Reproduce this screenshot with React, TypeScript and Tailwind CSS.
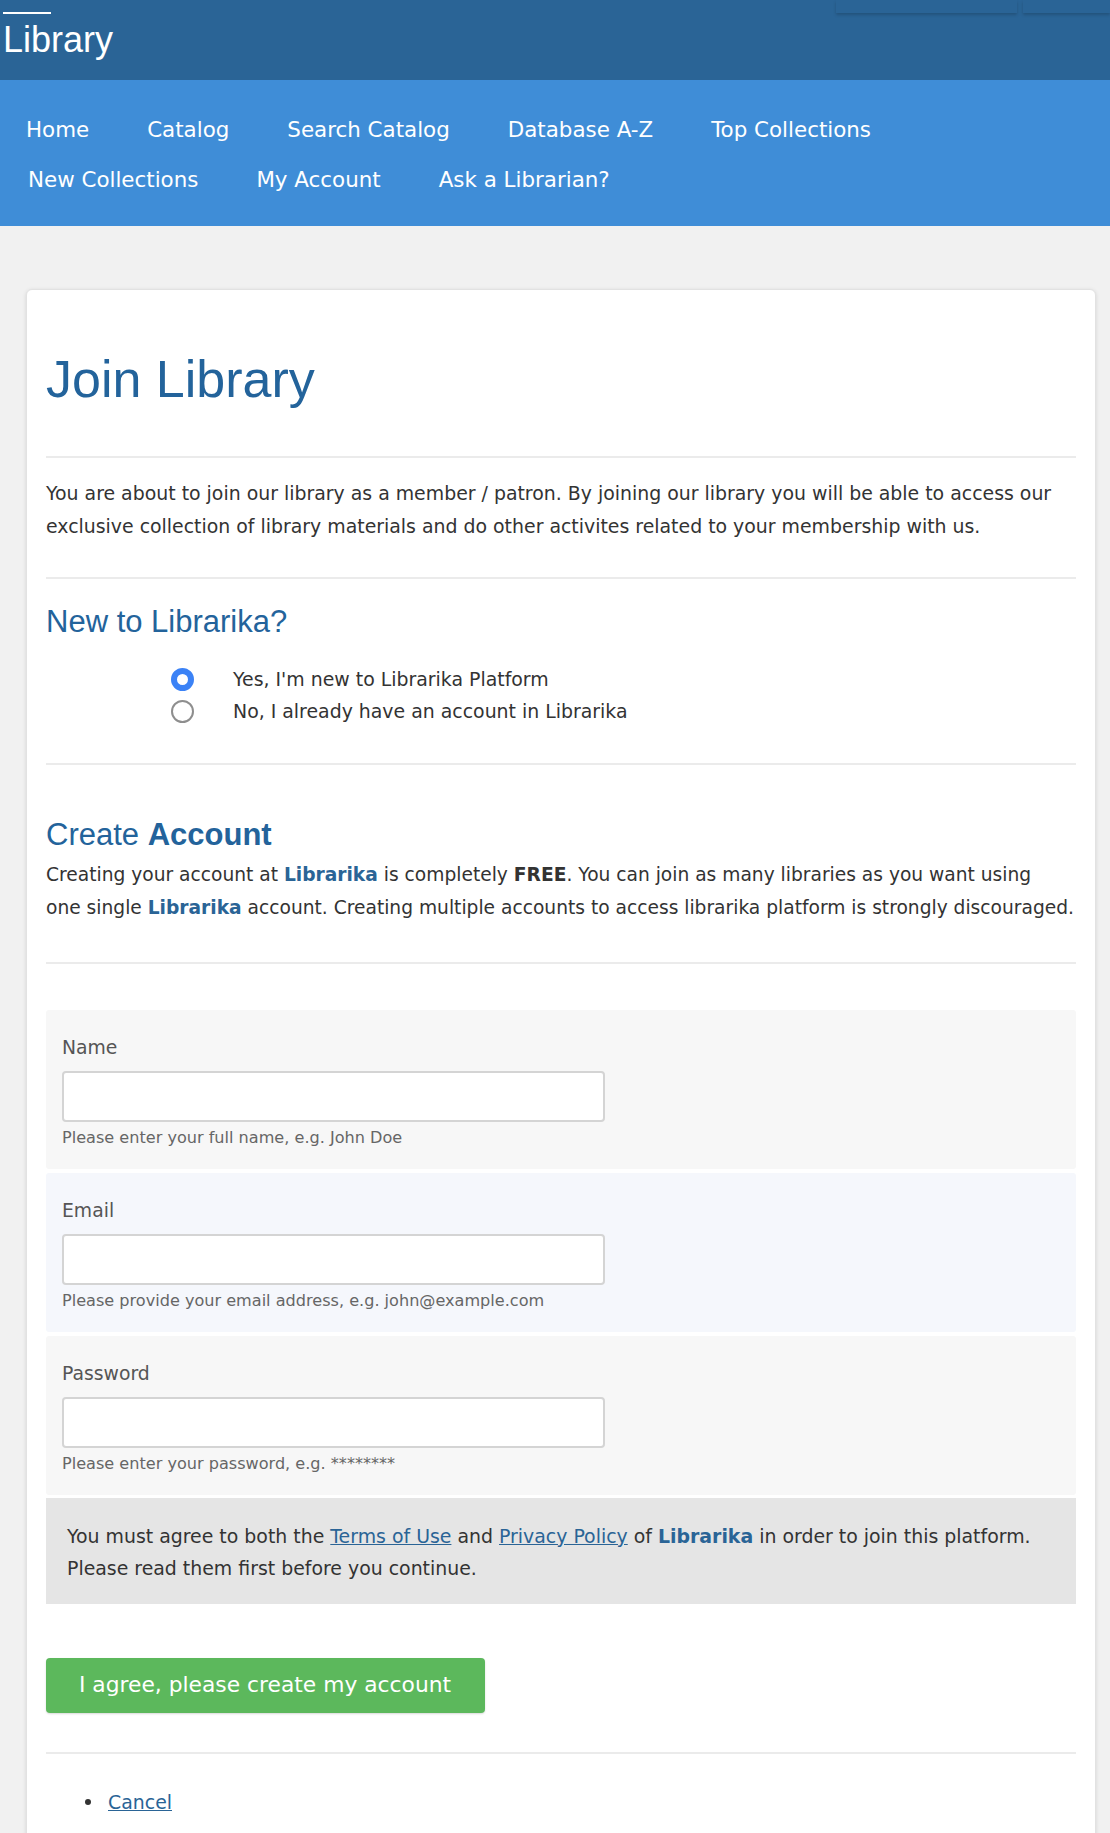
import React from "react";

const body = "font-['DejaVu_Sans',Verdana,sans-serif]";
const head = "font-['Liberation_Sans',Arial,sans-serif]";

function Hr() {
  return <div className="h-[2px] bg-[#ebebeb]" />;
}

function Field({ label, help, bg, type = "text" }: { label: string; help: string; bg: string; type?: string }) {
  return (
    <div className={`${bg} h-[159px] rounded-[3px] px-[16px] pt-[27px]`}>
      <div className="text-[18.8px] leading-[22px] text-[#555]">{label}</div>
      <input
        type={type}
        className="mt-[12px] block h-[51px] w-[543px] rounded-[4px] border-2 border-[#d4d4d4] bg-white"
      />
      <div className="mt-[6px] text-[16.1px] leading-[20px] text-[#666]">{help}</div>
    </div>
  );
}

function Radio({ checked, label }: { checked: boolean; label: string }) {
  return (
    <div className="flex h-[32px] items-center">
      <div className="flex w-[187px] justify-end pr-[39px]">
        {checked ? (
          <span className="block h-[23px] w-[23px] rounded-full border-[6px] border-[#3b82f6] bg-white" />
        ) : (
          <span className="block h-[23px] w-[23px] rounded-full border-2 border-[#8e8e8e] bg-white" />
        )}
      </div>
      <span className="text-[18.9px] text-[#333]">{label}</span>
    </div>
  );
}

export default function App() {
  return (
    <div className={`${body} min-h-[1833px] bg-[#f1f1f1] text-[#333]`}>
      <header className="h-[80px] bg-[#2a6496]">
        <div className="flex h-[22px] items-start justify-between">
          <div className="ml-[3px] mt-[12px] h-[2px] w-[48px] bg-white" />
          <div className="flex gap-[6px]">
            <div className="h-[13px] w-[181px] shadow-[0_2px_3px_rgba(0,0,0,0.18)]" />
            <div className="h-[13px] w-[87px] shadow-[0_2px_3px_rgba(0,0,0,0.18)]" />
          </div>
        </div>
        <div className={`${head} pl-[3px] text-[36px] leading-[36px] text-white`}>Library</div>
      </header>
      <nav className="h-[146px] bg-[#3f8dd7] pl-[26px] pt-[25px] text-[21.4px] text-white">
        <div className="flex h-[50px] items-center gap-[58px]">
          <span>Home</span>
          <span>Catalog</span>
          <span>Search Catalog</span>
          <span>Database A-Z</span>
          <span>Top Collections</span>
        </div>
        <div className="flex h-[50px] items-center gap-[58px] pl-[2px]">
          <span>New Collections</span>
          <span>My Account</span>
          <span>Ask a Librarian?</span>
        </div>
      </nav>
      <main className="ml-[26px] mr-[14px] mt-[63px] rounded-t-[6px] border border-[#e2e2e2] bg-white px-[19px] pt-[63px] pb-[30px] shadow-[0_1px_4px_rgba(0,0,0,0.12)]">
        <h1 className={`${head} text-[52px] leading-[52px] text-[#23639b]`}>Join Library</h1>
        <div className="mt-[51px]">
          <Hr />
        </div>
        <p className="mt-[19px] whitespace-nowrap text-[18.9px] leading-[33px]">
          You are about to join our library as a member / patron. By joining our library you will be able to access our
          <br />
          exclusive collection of library materials and do other activites related to your membership with us.
        </p>
        <div className="mt-[34px]">
          <Hr />
        </div>
        <h2 className={`${head} mt-[28px] text-[31px] leading-[30px] text-[#23639b]`}>New to Librarika?</h2>
        <div className="mt-[26px]">
          <Radio checked label="Yes, I'm new to Librarika Platform" />
          <Radio checked={false} label="No, I already have an account in Librarika" />
        </div>
        <div className="mt-[36px]">
          <Hr />
        </div>
        <h2 className={`${head} mt-[55px] text-[31px] leading-[30px] text-[#23639b]`}>
          Create <b>Account</b>
        </h2>
        <p className="mt-[9px] whitespace-nowrap text-[18.65px] leading-[32.5px]">
          Creating your account at <b className="text-[#2a6496]">Librarika</b> is completely <b>FREE</b>. You can join as
          many libraries as you want using
          <br />
          one single <b className="text-[#2a6496]">Librarika</b> account. Creating multiple accounts to access librarika
          platform is strongly discouraged.
        </p>
        <div className="mt-[38px]">
          <Hr />
        </div>
        <div className="mt-[46px] flex flex-col gap-[4px]">
          <Field label="Name" help="Please enter your full name, e.g. John Doe" bg="bg-[#f7f7f7]" />
          <Field label="Email" help="Please provide your email address, e.g. john@example.com" bg="bg-[#f5f7fc]" />
          <Field label="Password" help="Please enter your password, e.g. ********" bg="bg-[#f7f7f7]" type="password" />
        </div>
        <div className="mt-[3px] h-[106px] whitespace-nowrap bg-[#e5e5e5] px-[21px] pt-[22px] text-[18.9px] leading-[32px]">
          You must agree to both the{" "}
          <a href="#" className="text-[#2a6496] underline">
            Terms of Use
          </a>{" "}
          and{" "}
          <a href="#" className="text-[#2a6496] underline">
            Privacy Policy
          </a>{" "}
          of <b className="text-[#2a6496]">Librarika</b> in order to join this platform.
          <br />
          Please read them first before you continue.
        </div>
        <button className="mt-[54px] flex h-[55px] w-[439px] items-center rounded-[4px] bg-[#5cb85c] pl-[33px] text-[21.8px] text-white shadow-[0_1px_2px_rgba(0,0,0,0.15)]">
          I agree, please create my account
        </button>
        <div className="mt-[39px]">
          <Hr />
        </div>
        <ul className="mt-[36px] text-[18.9px] leading-[24px]">
          <li className="flex items-center">
            <span className="ml-[39px] block h-[6px] w-[6px] rounded-full bg-[#333]" />
            <a href="#" className="ml-[17px] text-[#2a6496] underline">
              Cancel
            </a>
          </li>
        </ul>
      </main>
    </div>
  );
}
